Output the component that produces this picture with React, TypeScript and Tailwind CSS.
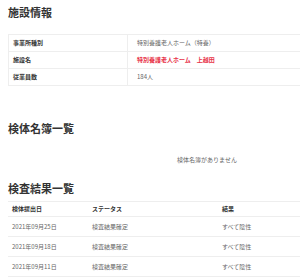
export default function App() {
  const rows = [
    { d: "2021年09月25日", s: "検査結果確定", r: "すべて陰性" },
    { d: "2021年09月18日", s: "検査結果確定", r: "すべて陰性" },
    { d: "2021年09月11日", s: "検査結果確定", r: "すべて陰性" },
  ];
  return (
    <div className="h-[280px] w-[300px] overflow-hidden bg-white">
      <div className="w-[414px] px-2 font-['Noto_Sans_CJK_JP','Noto_Sans',sans-serif] text-[#333]">
        <h2 className="pt-[5px] text-[11px] font-bold leading-[14px]">施設情報</h2>
        <div className="mt-[15px] border border-[#eee] text-[6px] leading-[16px]">
          <div className="flex border-b border-[#eee]">
            <div className="w-[119px] border-r border-[#eee] px-1 font-bold">事業所種別</div>
            <div className="px-[9px] text-[#666]">特別養護老人ホーム（特養）</div>
          </div>
          <div className="flex border-b border-[#eee]">
            <div className="w-[119px] border-r border-[#eee] px-1 font-bold">施設名</div>
            <div className="px-[9px] font-bold text-[#e8344a]">特別養護老人ホーム　上越田</div>
          </div>
          <div className="flex">
            <div className="w-[119px] border-r border-[#eee] px-1 font-bold">従業員数</div>
            <div className="px-[9px] text-[#666]">184人</div>
          </div>
        </div>
        <h2 className="mt-[35px] text-[11px] font-bold leading-[14px]">検体名簿一覧</h2>
        <div className="mt-[20px] text-center text-[6px] leading-[10px] text-[#666]">検体名簿がありません</div>
        <h2 className="mt-[16px] text-[11px] font-bold leading-[14px]">検査結果一覧</h2>
        <div className="mt-[6px] text-[6px]">
          <div className="flex border-y border-[#eee] font-bold leading-[14px]">
            <div className="w-[84px] px-1">検体提出日</div>
            <div className="w-[130px]">ステータス</div>
            <div>結果</div>
          </div>
          {rows.map((x) => (
            <div key={x.d} className="flex border-b border-[#eee] leading-[19px] text-[#666]">
              <div className="w-[84px] px-1">{x.d}</div>
              <div className="w-[130px]">{x.s}</div>
              <div>{x.r}</div>
            </div>
          ))}
        </div>
      </div>
    </div>
  );
}
